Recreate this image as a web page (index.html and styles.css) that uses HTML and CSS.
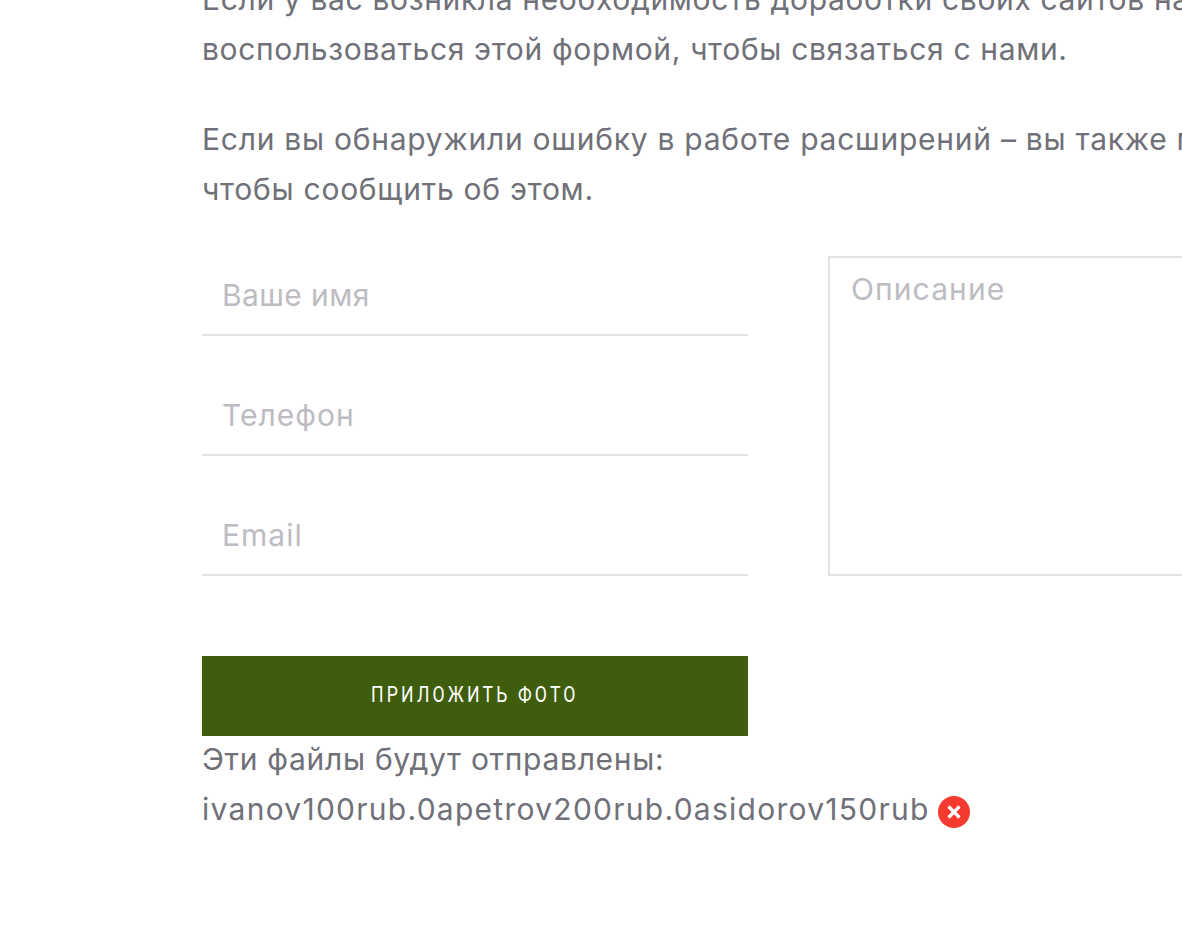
FILE: index.html
```html
<!DOCTYPE html>
<html lang="ru">
<head>
  <meta charset="UTF-8" />
  <title>Обратная связь</title>
  <link rel="stylesheet" href="styles.css">
</head>
<body>
  <div class="container">
    <p class="text">Если у вас возникла необходимость доработки своих сайтов на Битрикс – вы можете<br>воспользоваться этой формой, чтобы связаться с нами.</p>
    <p class="text">Если вы обнаружили ошибку в работе расширений – вы также можете написать нам,<br>чтобы сообщить об этом.</p>

    <form class="form">
      <div class="fields">
        <input class="field field-name" type="text" placeholder="Ваше имя" />
        <input class="field" type="text" placeholder="Телефон" />
        <input class="field" type="text" placeholder="Email" />
      </div>
      <textarea class="description" placeholder="Описание"></textarea>
    </form>

    <button class="attach" type="button"><span class="attach-label">Приложить фото</span></button>
    <div class="files">
      <div>Эти файлы будут отправлены:</div>
      <div class="file">ivanov100rub.0apetrov200rub.0asidorov150rub
        <svg class="remove" width="32" height="32" viewBox="0 0 32 32">
          <circle cx="16" cy="16" r="16" fill="#f4392f" />
          <path d="M10.5 10.5l11 11M21.5 10.5l-11 11" stroke="#fff" stroke-width="3.2" />
        </svg>
      </div>
    </div>
  </div>
</body>
</html>
```

FILE: styles.css
```css
* { margin: 0; padding: 0; box-sizing: border-box; }

html, body {
  height: 936px;
  overflow: hidden;
  background: #fff;
}

body {
  font-family: Inter, "Noto Sans", sans-serif;
  color: #707078;
}

.container {
  width: 1172px;
  margin-left: 202px;
  margin-top: -26px;
}

.text {
  font-size: 30px;
  line-height: 50px;
  letter-spacing: 0.65px;
  white-space: nowrap;
  margin-bottom: 40px;
}

.text + .text {
  letter-spacing: 0.74px;
}

.form {
  display: grid;
  grid-template-columns: 546px 546px;
  column-gap: 80px;
  margin-top: 42px;
}

.fields {
  display: flex;
  flex-direction: column;
  gap: 40px;
}

.field {
  height: 80px;
  border: 0;
  border-bottom: 2px solid #e2e2e4;
  padding: 0 20px;
  font: inherit;
  font-size: 30px;
  letter-spacing: 1px;
  outline: none;
}

.field-name {
  letter-spacing: 0.4px;
}

.description {
  height: 320px;
  border: 2px solid #e2e2e4;
  padding: 13px 21px;
  font: inherit;
  font-size: 30px;
  letter-spacing: 1.1px;
  outline: none;
  resize: none;
}

.field::placeholder,
.description::placeholder {
  color: #bcbcc2;
  opacity: 1;
}

.attach {
  display: block;
  width: 546px;
  height: 80px;
  margin-top: 80px;
  padding-bottom: 4px;
  border: 0;
  background: #3f5d0d;
  color: #fff;
  font-family: Roboto, sans-serif;
  font-size: 22px;
  letter-spacing: 4px;
  text-transform: uppercase;
}

/* label font is condensed in the original */
.attach-label {
  display: inline-block;
  transform: scaleX(0.8);
}

.files {
  margin-top: -2px;
  font-size: 30px;
  line-height: 50px;
  letter-spacing: 0.7px;
  white-space: nowrap;
}

.file {
  display: flex;
  align-items: center;
  gap: 8px;
  letter-spacing: 1.27px;
}

.remove {
  margin-top: 5px;
}
```
